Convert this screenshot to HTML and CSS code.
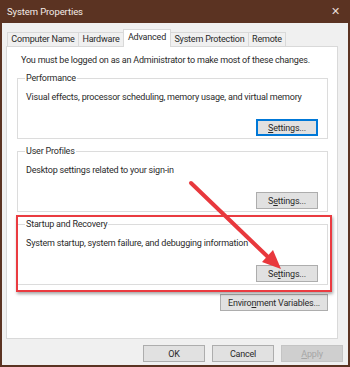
FILE: index.html
```html
<!DOCTYPE html>
<html lang="en">
<head>
    <meta charset="UTF-8">
    <title>System Properties</title>
    <link rel="stylesheet" href="styles.css">
</head>
<body>
    <div class="window">
        <div class="titlebar">
            <span class="title">System Properties</span>
            <span class="close">&#x2715;</span>
        </div>
        <div class="client">
            <div class="tabs">
                <div class="tab t-name">Computer Name</div>
                <div class="tab t-hw">Hardware</div>
                <div class="tab t-adv active">Advanced</div>
                <div class="tab t-sys">System Protection</div>
                <div class="tab t-rem">Remote</div>
            </div>
            <div class="panel">
                <div class="note">You must be logged on as an Administrator to make most of these changes.</div>

                <div class="group">
                    <div class="group-title">Performance</div>
                    <div class="desc">Visual effects, processor scheduling, memory usage, and virtual memory</div>
                    <div class="row"><button class="btn focus"><u>S</u>ettings...</button></div>
                </div>

                <div class="group">
                    <div class="group-title">User Profiles</div>
                    <div class="desc">Desktop settings related to your sign-in</div>
                    <div class="row"><button class="btn">S<u>e</u>ttings...</button></div>
                </div>

                <div class="group">
                    <div class="group-title">Startup and Recovery</div>
                    <div class="desc">System startup, system failure, and debugging information</div>
                    <div class="row"><button class="btn">Se<u>t</u>tings...</button></div>
                </div>

                <div class="row env"><button class="btn wide">Enviro<u>n</u>ment Variables...</button></div>
            </div>
            <div class="footer">
                <button class="btn">OK</button>
                <button class="btn">Cancel</button>
                <button class="btn" disabled><u>A</u>pply</button>
            </div>
        </div>

        <!-- annotation drawn over the screenshot -->
        <div class="highlight"></div>
        <svg class="arrow" width="350" height="367" viewBox="0 0 350 367">
            <line x1="191" y1="183" x2="268" y2="257" stroke="#e8383d" stroke-width="4" stroke-linecap="round"/>
            <polygon points="281,269 262,262 273,250" fill="#e8383d"/>
        </svg>
    </div>
</body>
</html>
```

FILE: styles.css
```css
body {
    margin: 0;
    font-family: Roboto, "Noto Sans", sans-serif;
    font-size: 9px;
    letter-spacing: -0.2px;
    color: #2a2a2a;
}
.window {
    width: 350px;
    height: 367px;
    box-sizing: border-box;
    background-color: #5b3322;
    padding: 0 2px 2px 2px;
    display: flex;
    flex-direction: column;
    position: relative;
}
.titlebar {
    height: 23px;
    flex: none;
    display: flex;
    align-items: center;
    justify-content: space-between;
    color: #f4ece8;
    padding: 0 8px 0 5px;
    font-size: 9.5px;
    letter-spacing: -0.1px;
}
.close {
    font-size: 11px;
    color: #e8dcd6;
}
.client {
    flex: 1;
    background-color: #f0f0f0;
    padding: 6px 10px 0 4px;
    display: flex;
    flex-direction: column;
}
.tabs {
    display: flex;
    align-items: flex-end;
    height: 17px;
    padding-left: 1px;
}
.tab {
    flex: none;
    box-sizing: border-box;
    border: 1px solid #d9d9d9;
    border-bottom: none;
    background-color: #f0f0f0;
    height: 14px;
    line-height: 13px;
    text-align: center;
    margin-right: -1px;
    white-space: nowrap;
}
.tab.active {
    background-color: #fff;
    height: 18px;
    line-height: 15px;
    margin-bottom: -1px;
    position: relative;
    z-index: 1;
}
.t-name { width: 72px; }
.t-hw { width: 46px; }
.t-adv { width: 48px; }
.t-sys { width: 79px; }
.t-rem { width: 38px; }
.panel {
    background-color: #fff;
    border: 1px solid #d9d9d9;
    height: 293px;
    box-sizing: border-box;
    padding: 7px 9px 0 10px;
    flex: none;
}
.note {
    line-height: 12px;
    margin-left: 4px;
    white-space: nowrap;
}
.group {
    border: 1px solid #dcdcdc;
    margin-top: 12px;
    padding: 0 9px 7px 7px;
    height: 61px;
    box-sizing: border-box;
}
.group-title {
    display: inline-block;
    background-color: #fff;
    line-height: 12px;
    margin-top: -7px;
    padding: 0 1px;
    vertical-align: top;
}
.desc {
    line-height: 12px;
    margin-top: 2px;
    padding-left: 1px;
    white-space: nowrap;
}
.row {
    display: flex;
    justify-content: flex-end;
    margin-top: 16px;
}
.btn {
    font-family: inherit;
    font-size: 9px;
    letter-spacing: -0.2px;
    background-color: #e1e1e1;
    border: 1px solid #adadad;
    color: #2a2a2a;
    width: 62px;
    height: 17px;
    padding: 0;
    box-sizing: border-box;
}
.btn.focus {
    border: 2px solid #0078d7;
}
.env {
    margin-top: 9px;
}
.btn.wide {
    width: 108px;
}
.btn:disabled {
    color: #a6a6a6;
    border-color: #c4c4c4;
    background-color: #cfcfcf;
}
.footer {
    display: flex;
    justify-content: flex-end;
    gap: 7px;
    margin-top: 6px;
    margin-right: -5px;
}
.highlight {
    position: absolute;
    left: 16px;
    top: 215px;
    width: 312px;
    height: 73px;
    border: 2px solid #ea3b40;
    box-shadow: 1px 2px 3px rgba(0, 0, 0, 0.35);
}
.arrow {
    position: absolute;
    left: 0;
    top: 0;
    pointer-events: none;
}
```
